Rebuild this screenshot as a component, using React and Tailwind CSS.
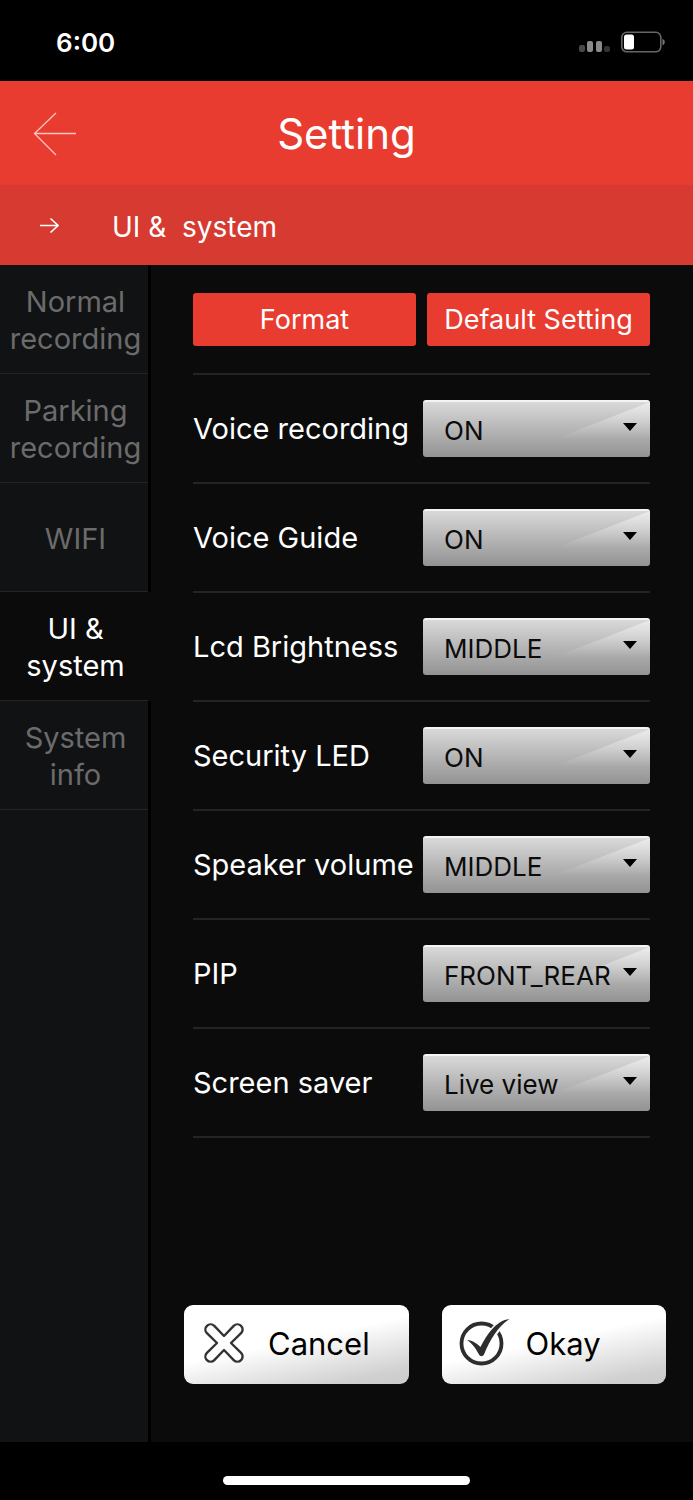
import { useState } from "react";

const TABS = ["Normal recording", "Parking recording", "WIFI", "UI & system", "System info"];

const SETTINGS = [
  { id: "voice-recording", label: "Voice recording", value: "ON", options: ["ON", "OFF"] },
  { id: "voice-guide", label: "Voice Guide", value: "ON", options: ["ON", "OFF"] },
  { id: "lcd-brightness", label: "Lcd Brightness", value: "MIDDLE", options: ["LOW", "MIDDLE", "HIGH"] },
  { id: "security-led", label: "Security LED", value: "ON", options: ["ON", "OFF"] },
  { id: "speaker-volume", label: "Speaker volume", value: "MIDDLE", options: ["LOW", "MIDDLE", "HIGH"] },
  { id: "pip", label: "PIP", value: "FRONT_REAR", options: ["FRONT_REAR", "REAR_FRONT", "FRONT", "REAR"] },
  { id: "screen-saver", label: "Screen saver", value: "Live view", options: ["Live view", "Clock", "OFF"] },
];

function StatusBar() {
  return (
    <div className="h-[81px] flex items-center justify-between pl-14 pr-7 pt-1 bg-black">
      <span className="text-[26px] leading-8 font-semibold">6:00</span>
      <div className="flex items-center gap-2.5">
        <svg className="w-8 h-6" viewBox="0 0 32 24" aria-hidden="true">
          <rect x="0" y="14" width="6" height="7" rx="2" fill="#484848" />
          <rect x="8" y="10" width="6" height="11" rx="2" fill="#8a8a8a" />
          <rect x="17" y="10" width="6" height="11" rx="2" fill="#8a8a8a" />
          <rect x="25" y="15" width="6" height="6" rx="2" fill="#333" />
        </svg>
        <svg className="w-11 h-6" viewBox="0 0 44 24" aria-hidden="true">
          <rect x="0.8" y="1.3" width="39" height="19.5" rx="5" fill="none" stroke="#666" strokeWidth="1.6" />
          <rect x="3" y="3.5" width="10" height="15" rx="2.5" fill="#fff" />
          <path d="M41.5 8c3 .8 3 5.4 0 6.2z" fill="#777" />
        </svg>
      </div>
    </div>
  );
}

function Tab({ label, active, onClick }) {
  return (
    <button
      onClick={onClick}
      aria-current={active ? "page" : undefined}
      className={`h-[109px] w-full border-r-3 text-[29px] leading-[37px] text-center ${
        active ? "bg-[#0b0b0b] border-[#0b0b0b] text-white" : "border-black text-[#6b6b6b]"
      }`}
    >
      <span className="h-full flex items-center justify-center pl-[3px] pt-0.5 border-b border-[#222425]">
        {label}
      </span>
    </button>
  );
}

function SettingRow({ id, label, options, value, onChange }) {
  return (
    <div className="h-[109px] flex items-center justify-between border-b-2 border-[#242424]">
      <label htmlFor={id} className="text-[29px] leading-9 whitespace-nowrap">{label}</label>
      <div className="relative w-[227px] shrink-0 rounded-[3px] overflow-hidden border-t-2 border-[#f4f4f4] bg-linear-to-b from-[#d9d9d9] to-[#939393]">
        {/* Glare and arrow */}
        <svg className="absolute inset-0 w-full h-full pointer-events-none" viewBox="0 0 227 55" aria-hidden="true">
          <defs>
            <linearGradient id={`${id}-glare`} x1="0" y1="0" x2="0" y2="1">
              <stop offset="0" stopColor="#fff" stopOpacity="0.5" />
              <stop offset="1" stopColor="#fff" stopOpacity="0" />
            </linearGradient>
          </defs>
          <path d="M132 37 227 0V37z" fill={`url(#${id}-glare)`} />
          <path d="M200 21h14l-7 8z" fill="#000" />
        </svg>
        <select
          id={id}
          value={value}
          onChange={(e) => onChange(e.target.value)}
          className="relative block w-full h-[55px] appearance-none bg-transparent pl-[21px] pr-8 pt-0.5 text-[26px] text-[#0b0b0b]"
        >
          {options.map((option) => <option key={option}>{option}</option>)}
        </select>
      </div>
    </div>
  );
}

function ActionButton({ icon, children }) {
  return (
    <button className="flex-1 h-[79px] flex items-center rounded-[9px] bg-linear-[168deg,#fff_0%,#fff_46%,#d0d0d0_88%,#cbcbcb_100%] text-[31px] text-black">
      {icon}
      {children}
    </button>
  );
}

export default function App() {
  const [tab, setTab] = useState("UI & system");
  const [values, setValues] = useState(
    Object.fromEntries(SETTINGS.map((s) => [s.id, s.value]))
  );

  return (
    <div className="min-h-screen flex flex-col bg-black text-white font-[Inter,sans-serif]">
      <StatusBar />

      {/* Header */}
      <header className="grid grid-cols-[1fr_auto_1fr] items-center h-[104px] px-8 pt-0.5 bg-[#e83c30]">
        <button aria-label="Back" className="justify-self-start">
          <svg className="w-11 h-11" viewBox="0 0 44 44" fill="none" stroke="#fbc4bf" strokeWidth="1.3" aria-hidden="true">
            <path d="M44 21.500H2.500M24 1 2.500 21.500 24 43" />
          </svg>
        </button>
        <h1 className="text-[42px] leading-[52px]">Setting</h1>
      </header>
      <div className="h-20 flex items-center gap-[53px] pl-[39px] pt-1 bg-[#d63a31]">
        <svg className="w-5 h-5" viewBox="0 0 20 20" fill="none" stroke="#fff" strokeWidth="1.6" aria-hidden="true">
          <path d="M1 8.500h18M11.500 1.500 19 8.500l-7.500 7" />
        </svg>
        <h2 className="text-[28px] leading-9 whitespace-pre">{"UI &  system"}</h2>
      </div>

      <div className="flex-1 flex">
        {/* Sidebar */}
        <nav className="w-[151px] shrink-0 flex flex-col bg-[#111214]">
          {TABS.map((t) => <Tab key={t} label={t} active={t === tab} onClick={() => setTab(t)} />)}
          <div className="flex-1 border-r-3 border-black" />
        </nav>

        {/* Settings */}
        <main className="flex-1 flex flex-col bg-[#0b0b0b]">
          <div className="pl-[42px] pr-[43px]">
            <div className="flex gap-[11px] pt-7 pb-[27px] border-b-2 border-[#242424]">
              <button className="flex-1 h-[53px] pt-0.5 rounded-[3px] bg-[#e83c30] text-[27px] whitespace-nowrap">Format</button>
              <button className="flex-1 h-[53px] pt-0.5 rounded-[3px] bg-[#e83c30] text-[27px] whitespace-nowrap">Default Setting</button>
            </div>
            {SETTINGS.map((s) => (
              <SettingRow
                key={s.id}
                {...s}
                value={values[s.id]}
                onChange={(v) => setValues({ ...values, [s.id]: v })}
              />
            ))}
          </div>

          <div className="mt-auto flex gap-[33px] pl-[33px] pr-[27px] pb-[58px]">
            <ActionButton
              icon={
                <svg className="w-10 h-10 ml-5 mr-6 mb-1" viewBox="0 0 40 40" fill="#fff" stroke="#333" strokeWidth="2.400" strokeLinejoin="round" aria-hidden="true">
                  <path d="M20 13 29.700 2.900A5.100 5.100 0 0 1 37.100 10.200L27 20 37.100 29.800A5.100 5.100 0 0 1 29.700 37.100L20 27 10.300 37.100A5.100 5.100 0 0 1 2.900 29.800L13 20 2.900 10.200A5.100 5.100 0 0 1 10.300 2.900z" />
                </svg>
              }
            >
              Cancel
            </ActionButton>
            <ActionButton
              icon={
                <svg className="w-[52px] h-12 ml-[17px] mr-[15px] mb-1.5" viewBox="0 0 52 48" aria-hidden="true">
                  <circle cx="22.500" cy="25.500" r="20" fill="none" stroke="#2d2d2d" strokeWidth="3.800" />
                  <path d="M31.500 13C35 8.500 38 5.500 42 3M37 15.500C39.500 11.500 42 8.500 45 6" fill="none" stroke="#f8f8f8" strokeWidth="3" />
                  <path d="M8 22c6 .500 10 3.500 13.500 7C28 16.500 37 2.500 50.500 1 39 8 31 22 25 36.500c-1.200 2.200-3.800 2.200-5 0C17 31 14 26 8 22z" fill="#2d2d2d" />
                </svg>
              }
            >
              Okay
            </ActionButton>
          </div>
        </main>
      </div>

      {/* Home indicator */}
      <div className="h-[58px] flex justify-center items-end pb-[15px]">
        <div className="w-[247px] h-[9px] rounded-full bg-white" />
      </div>
    </div>
  );
}
